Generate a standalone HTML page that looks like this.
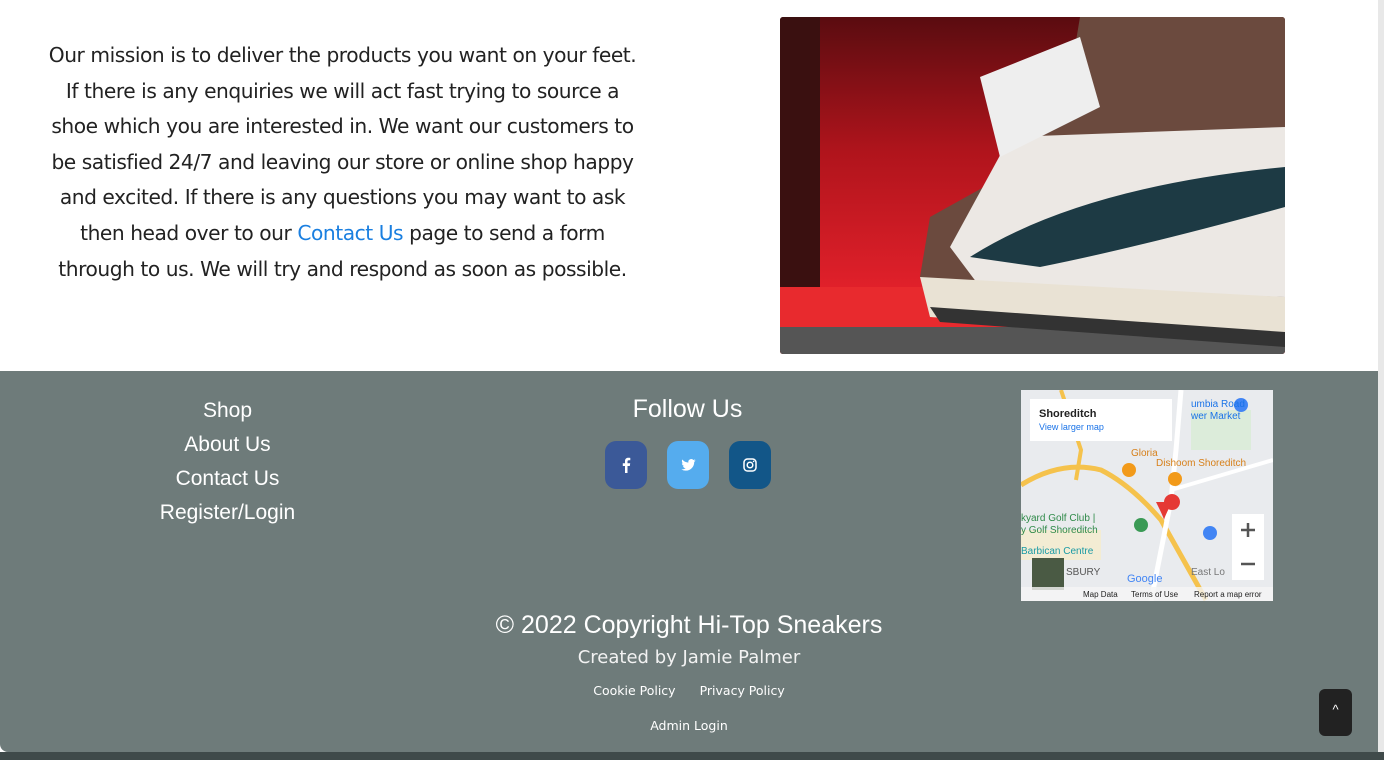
<!DOCTYPE html>
<html><head><meta charset="utf-8"><style>
*{margin:0;padding:0;box-sizing:border-box}
body{width:1384px;height:760px;overflow:hidden;background:#fff;font-family:"Liberation Sans",sans-serif;position:relative}
.mission{position:absolute;left:30px;top:38px;width:625px;text-align:center;font-family:"DejaVu Sans","Liberation Sans",sans-serif;font-size:20.2px;line-height:35.6px;color:#222;letter-spacing:-0.45px;white-space:nowrap}
.mission a{color:#1a7fe0;text-decoration:none}
.shoe{position:absolute;left:780px;top:17px;width:505px;height:337px;border-radius:3px;overflow:hidden;
background:linear-gradient(180deg,#5a0c10 0%,#b0141c 40%,#e0202a 80%,#ff3b3b 90%,#444 100%)}
.footer{position:absolute;left:0;top:371px;width:1378px;height:381px;background:#6e7b7a;border-bottom-left-radius:8px}
.strip{position:absolute;left:0;top:752px;width:1384px;height:8px;background:#3f4a4a}
.rb{position:absolute;left:1378px;top:0;width:6px;height:752px;background:#e8e8e8}
.links{position:absolute;left:0;width:455px;text-align:center;color:#fff;font-size:21px}
.links div{height:34px;line-height:34px}
.fu{position:absolute;left:560px;width:255px;top:395px;text-align:center;color:#fff;font-size:25px}
.soc{position:absolute;top:441px;width:42px;height:48px;border-radius:11px;display:flex;align-items:center;justify-content:center}
.map{position:absolute;left:1021px;top:390px;width:252px;height:211px;background:#e9ebee;overflow:hidden}
.c{position:absolute;left:0;width:1378px;text-align:center;color:#fff}
.top{position:absolute;left:1319px;top:689px;width:33px;height:47px;background:#222;border-radius:6px;color:#fff;text-align:center;font-size:13px;line-height:42px}
</style></head><body>
<div class="mission">Our mission is to deliver the products you want on your feet.<br>If there is any enquiries we will act fast trying to source a<br>shoe which you are interested in. We want our customers to<br>be satisfied 24/7 and leaving our store or online shop happy<br>and excited. If there is any questions you may want to ask<br>then head over to our <a>Contact Us</a> page to send a form<br>through to us. We will try and respond as soon as possible.</div>
<div class="shoe">
<svg width="505" height="337" viewBox="0 0 505 337">
<rect x="0" y="0" width="40" height="337" fill="#3a1010"/>
<rect x="0" y="270" width="505" height="67" fill="#e82a2e"/>
<rect x="0" y="310" width="505" height="27" fill="#555"/>
<path d="M300 0 L505 0 L505 330 L180 290 L140 260 L150 200 L240 150 L290 60 Z" fill="#6b4a3e"/>
<path d="M230 120 L505 110 L505 280 L200 270 L170 230 Z" fill="#ece8e4"/>
<path d="M190 240 Q300 170 505 150 L505 190 Q360 230 260 250 Z" fill="#1d3a44"/>
<path d="M140 260 L505 280 L505 325 L150 300 Z" fill="#e9e2d4"/>
<path d="M150 290 L505 315 L505 330 L160 305 Z" fill="#333"/>
<path d="M200 60 L300 20 L320 90 L220 140 Z" fill="#eee"/>
</svg></div>
<div class="rb"></div>
<div class="footer"></div>
<div class="strip"></div>
<div class="links" style="top:394px"><div>Shop</div><div>About Us</div><div>Contact Us</div><div>Register/Login</div></div>
<div class="fu">Follow Us</div>
<div class="soc" style="left:605px;background:#3b5998"><svg width="10" height="16" viewBox="0 0 10 16"><path d="M6.5 16V9h2.3l.4-2.7H6.5V4.6c0-.8.3-1.3 1.4-1.3H9.3V.9C9 .8 8.2.7 7.3.7 5.3.7 4 1.9 4 4.1v2.2H1.8V9H4v7z" fill="#fff"/></svg></div>
<div class="soc" style="left:667px;background:#55acee"><svg width="15" height="12" viewBox="0 0 24 20"><path d="M24 2.4a9.8 9.8 0 0 1-2.8.8A4.9 4.9 0 0 0 23.3.5a9.9 9.9 0 0 1-3.1 1.2A4.9 4.9 0 0 0 11.8 6 14 14 0 0 1 1.700.9a4.9 4.9 0 0 0 1.5 6.6A4.9 4.9 0 0 1 1 6.9a4.9 4.9 0 0 0 3.9 4.8 4.9 4.9 0 0 1-2.2.1 4.9 4.9 0 0 0 4.6 3.4A9.9 9.9 0 0 1 0 17.2 14 14 0 0 0 7.5 19.4c9.1 0 14-7.5 14-14v-.6A10 10 0 0 0 24 2.4z" fill="#fff"/></svg></div>
<div class="soc" style="left:729px;background:#125688"><svg width="14" height="14" viewBox="0 0 14 14"><rect x="1" y="1" width="12" height="12" rx="3.5" fill="none" stroke="#fff" stroke-width="1.5"/><circle cx="7" cy="7" r="2.8" fill="none" stroke="#fff" stroke-width="1.5"/><circle cx="10.6" cy="3.4" r=".8" fill="#fff"/></svg></div>
<div class="map">
<svg width="252" height="211" viewBox="0 0 252 211" style="position:absolute;left:0;top:0">
<path d="M0 95 Q40 70 80 80 Q110 95 140 130 L185 210" stroke="#f5c24c" stroke-width="5" fill="none"/>
<path d="M40 0 L60 60 L55 90" stroke="#f5c24c" stroke-width="4" fill="none"/>
<path d="M160 0 L155 60 L150 110 L130 211" stroke="#fff" stroke-width="5" fill="none"/>
<path d="M150 100 L252 70" stroke="#fff" stroke-width="4" fill="none"/>
<rect x="0" y="140" width="80" height="30" fill="#f7ecc7" opacity=".7"/>
<rect x="170" y="20" width="60" height="40" fill="#d6ecd2" opacity=".7"/>
<circle cx="120" cy="135" r="7" fill="#3a9a55"/>
<circle cx="108" cy="80" r="7" fill="#f29a1a"/>
<circle cx="154" cy="89" r="7" fill="#f29a1a"/>
<circle cx="220" cy="15" r="7" fill="#4285f4"/>
<circle cx="189" cy="143" r="7" fill="#4285f4"/>
<path d="M143 112 a8 8 0 1 1 0 0.1z" fill="#e53935"/>
<path d="M135 112 Q143 128 143 130 Q143 128 151 112 Z" fill="#e53935"/>
<rect x="9" y="9" width="142" height="42" fill="#fff"/>
<rect x="211" y="124" width="32" height="66" fill="#fff"/>
<path d="M220 140 h14 M227 133 v14 M220 174 h14" stroke="#555" stroke-width="2.5"/>
<rect x="11" y="168" width="32" height="32" fill="#4a5a44"/>
<text x="18" y="27" font-family="Liberation Sans" font-size="11" font-weight="bold" fill="#222">Shoreditch</text>
<text x="18" y="40" font-family="Liberation Sans" font-size="9" fill="#1a73e8">View larger map</text>
<text x="110" y="66" font-family="Liberation Sans" font-size="10" fill="#d7801a">Gloria</text>
<text x="135" y="76" font-family="Liberation Sans" font-size="10" fill="#d7801a">Dishoom Shoreditch</text>
<text x="0" y="131" font-family="Liberation Sans" font-size="10" fill="#2f8a49">kyard Golf Club |</text>
<text x="0" y="143" font-family="Liberation Sans" font-size="10" fill="#2f8a49">y Golf Shoreditch</text>
<text x="0" y="164" font-family="Liberation Sans" font-size="10" fill="#1a9aa5">Barbican Centre</text>
<text x="45" y="185" font-family="Liberation Sans" font-size="10" fill="#555">SBURY</text>
<text x="170" y="185" font-family="Liberation Sans" font-size="10" fill="#777">East Lo</text>
<text x="170" y="17" font-family="Liberation Sans" font-size="10" fill="#1a73e8">umbia Road</text>
<text x="170" y="29" font-family="Liberation Sans" font-size="10" fill="#1a73e8">wer Market</text>
<text x="106" y="192" font-family="Liberation Sans" font-size="11" fill="#4285f4">Google</text>
<rect x="0" y="197" width="252" height="14" fill="#f5f5f5" opacity=".8"/>
<text x="62" y="207" font-family="Liberation Sans" font-size="8" fill="#222">Map Data</text>
<text x="110" y="207" font-family="Liberation Sans" font-size="8" fill="#222">Terms of Use</text>
<text x="173" y="207" font-family="Liberation Sans" font-size="8" fill="#222">Report a map error</text>
</svg></div>
<div class="c" style="top:611px;font-size:25px">© 2022 Copyright Hi-Top Sneakers</div>
<div class="c" style="top:647px;font-size:18px;font-family:'DejaVu Sans',sans-serif;color:#f2f2f2">Created by Jamie Palmer</div>
<div class="c" style="top:683px;font-size:12.5px;font-family:'DejaVu Sans',sans-serif"><span style="margin-right:24px">Cookie Policy</span><span>Privacy Policy</span></div>
<div class="c" style="top:718px;font-size:12.5px;font-family:'DejaVu Sans',sans-serif">Admin Login</div>
<div class="top">^</div>
</body></html>
